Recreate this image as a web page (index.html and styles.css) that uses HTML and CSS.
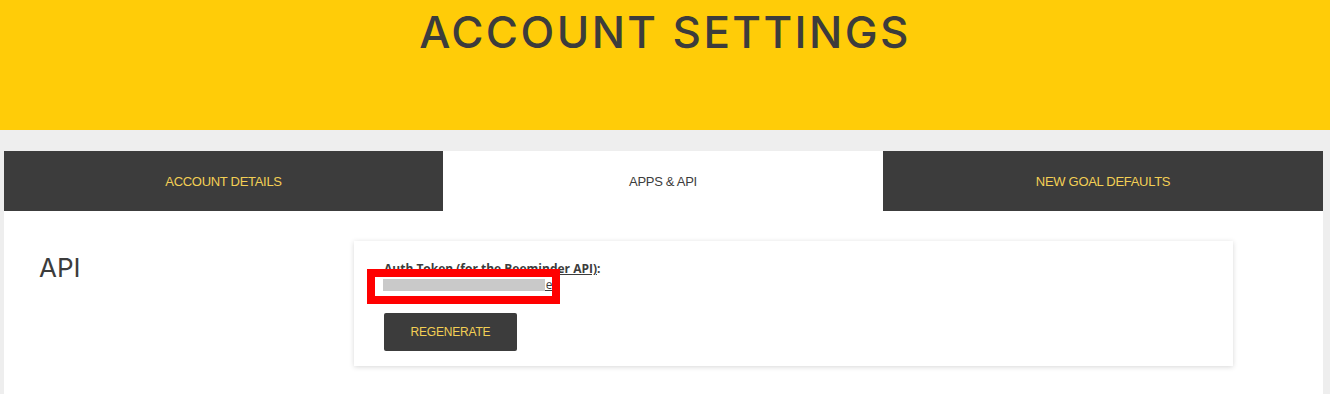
FILE: index.html
```html
<!DOCTYPE html>
<html>
<head>
    <title>Account Settings</title>
    <link rel="stylesheet" href="styles.css">
</head>
<body>
    <header class="hero">
        <h1 class="hero-title">ACCOUNT SETTINGS</h1>
    </header>
    <main class="wrap">
        <nav class="tabs">
            <div class="tab">ACCOUNT DETAILS</div>
            <div class="tab active">APPS &amp; API</div>
            <div class="tab">NEW GOAL DEFAULTS</div>
        </nav>
        <section class="panel">
            <h2 class="section-title">API</h2>
            <div class="card">
                <div class="label"><a href="#">Auth Token (for the Beeminder API)</a>:</div>
                <div class="token">
                    <a href="#" class="token-link">xxxxxxxxxxxxxxxxxxxxxxxe</a>
                    <span class="blur"></span>
                    <span class="marker"></span>
                </div>
                <div class="button">REGENERATE</div>
            </div>
        </section>
    </main>
</body>
</html>
```

FILE: styles.css
```css
body {
    margin: 0;
    padding: 0;
    width: 1330px;
    height: 394px;
    overflow: hidden;
    background: #eeeeee;
    font-family: "Open Sans", sans-serif;
    color: #3c3c3c;
}
.hero {
    height: 130px;
    box-sizing: border-box;
    padding-top: 6px;
    background: #ffcc08;
    text-align: center;
}
.hero-title {
    margin: 0;
    font-family: Inter, sans-serif;
    font-weight: 500;
    font-size: 44px;
    line-height: 52px;
    letter-spacing: 2.4px;
    color: #3c3c3c;
}
.wrap {
    padding: 21px 7px 0 4px;
}
.tabs {
    display: grid;
    grid-template-columns: 439px 440px 440px;
    height: 60px;
}
.tab {
    background: #3c3c3c;
    color: #f3cf55;
    display: flex;
    align-items: center;
    justify-content: center;
    font-family: "Liberation Sans", sans-serif;
    font-size: 13px;
    letter-spacing: -0.3px;
}
.tab.active {
    background: #ffffff;
    color: #3c3c3c;
}
.panel {
    background: #ffffff;
    height: 183px;
    box-sizing: border-box;
    display: grid;
    grid-template-columns: 350px 879px;
    align-items: start;
    padding-top: 30px;
}
.section-title {
    margin: 12px 0 0 35px;
    font-family: Inter, sans-serif;
    font-weight: 400;
    font-size: 26px;
    line-height: 30px;
    color: #3c3c3c;
}
.card {
    height: 125px;
    box-sizing: border-box;
    padding: 20px 30px 0;
    background: #ffffff;
    box-shadow: 0 1px 5px rgba(0, 0, 0, 0.16);
}
.label {
    font-size: 12px;
    font-weight: 700;
    line-height: 16px;
}
.label a {
    color: #3c3c3c;
}
.token {
    position: relative;
    font-size: 12px;
    line-height: 16px;
    height: 18px;
}
.token-link {
    color: #3c3c3c;
    letter-spacing: 0.75px;
}
.blur {
    position: absolute;
    left: -1px;
    top: 2px;
    width: 162px;
    height: 12px;
    background: #c9c9c9;
}
.marker {
    position: absolute;
    left: -17px;
    top: -8px;
    width: 177px;
    height: 19px;
    border: 8px solid #ff0000;
}
.button {
    margin-top: 18px;
    width: 133px;
    height: 38px;
    border-radius: 2px;
    background: #3c3c3c;
    color: #f3cf55;
    display: flex;
    align-items: center;
    justify-content: center;
    font-family: "Liberation Sans", sans-serif;
    font-size: 12px;
    letter-spacing: -0.2px;
}
```
